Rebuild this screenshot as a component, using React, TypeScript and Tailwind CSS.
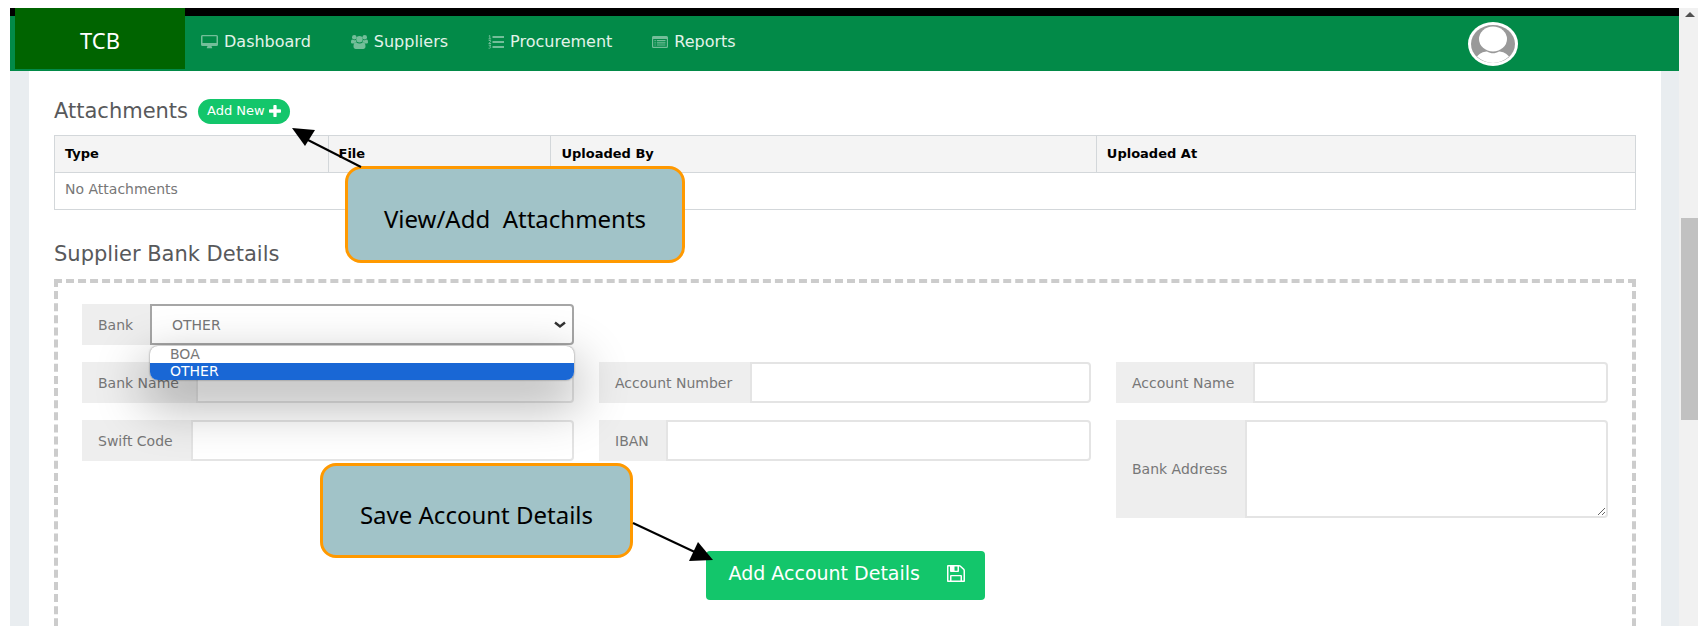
import { ReactNode, useState } from 'react'
import clsx from 'clsx'

const DesktopIcon = () => (
  <svg viewBox="0 0 17 14" className="h-[14px] w-[17px]" fill="currentColor">
    <path
      fillRule="evenodd"
      d="M1.500 0h14A1.500 1.500 0 0 1 17 1.500v8a1.500 1.500 0 0 1-1.500 1.500H10.500c0 .8.700 1.200.7 1.800v.4H5.800v-.4c0-.6.7-1 .7-1.800h-5A1.500 1.500 0 0 1 0 9.500v-8A1.500 1.500 0 0 1 1.500 0zm0 1.300v6.800h14V1.300z"
    />
  </svg>
)

const UsersIcon = () => (
  <svg viewBox="0 0 17 14" className="h-[14px] w-[17px]" fill="currentColor">
    <circle cx="3.300" cy="2.300" r="2.300" />
    <circle cx="13.700" cy="2.300" r="2.300" />
    <circle cx="8.500" cy="4.200" r="3.200" />
    <path d="M0 7.200c0-1.500.3-2.700 1.300-2.700 1.200.8 2.400.9 3.600.4 0 .9.300 1.700.9 2.400-1.300 0-2.300.5-3 1.300H1.700C.7 8.600 0 8.200 0 7.200zM17 7.200c0-1.500-.3-2.700-1.300-2.700-1.200.8-2.400.9-3.600.4 0 .9-.3 1.700-.9 2.400 1.300 0 2.300.5 3 1.300h1.100c1 0 1.700-.4 1.700-1.400z" />
    <path d="M2.500 11.600c0-2.200.6-4.300 2.500-4.300 2.100 1.600 4.900 1.600 7 0 1.900 0 2.500 2.100 2.500 4.300 0 1.500-1 2.400-2.300 2.400H4.800c-1.300 0-2.300-.9-2.300-2.400z" />
  </svg>
)

const ListIcon = () => (
  <svg viewBox="0 0 16 14" className="h-[14px] w-[16px]" fill="currentColor">
    <path d="M4.500 1H16v2H4.500zM4.500 6H16v2H4.500zM4.500 11H16v2H4.500z" />
    <path
      d="M.8 1l1-.5v3.300M.5 3.900h2.600M.7 5.500h1.900v1L.8 8.500h2.300M.7 10.200h2.100l-1 1.200c1.600.3 1 2.100-1.200 1.800"
      fill="none"
      stroke="currentColor"
    />
  </svg>
)

const ReportIcon = () => (
  <svg viewBox="0 0 16 12" className="h-[12px] w-[16px]" fill="currentColor">
    <path
      fillRule="evenodd"
      d="M1.500 0h13A1.500 1.500 0 0 1 16 1.500v9a1.500 1.500 0 0 1-1.500 1.500h-13A1.500 1.500 0 0 1 0 10.500v-9A1.500 1.500 0 0 1 1.500 0zM1.200 3v7.700h13.600V3z"
    />
    <path d="M2.500 4h1.200v1.200H2.500zM4.800 4h8.700v1.200H4.800zM2.500 6.200h1.200v1.200H2.500zM4.800 6.200h8.700v1.200H4.800zM2.500 8.400h1.200v1.200H2.500zM4.800 8.400h8.700v1.200H4.800z" />
  </svg>
)

const PlusIcon = () => (
  <svg viewBox="192 128 1408 1408" className="h-3 w-3" fill="currentColor">
    <path d="M1600 736v192q0 40-28 68t-68 28h-416v416q0 40-28 68t-68 28h-192q-40 0-68-28t-28-68v-416h-416q-40 0-68-28t-28-68v-192q0-40 28-68t68-28h416v-416q0-40 28-68t68-28h192q40 0 68 28t28 68v416h416q40 0 68 28t28 68z" />
  </svg>
)

const SaveIcon = () => (
  <svg viewBox="128 128 1536 1536" className="h-[17px] w-[18px]" preserveAspectRatio="none" fill="currentColor">
    <path d="M512 1536h768v-384h-768v384zm896 0h128v-896q0-14-10-38.500t-20-34.500l-281-281q-10-10-34-20t-39-10v416q0 40-28 68t-68 28h-576q-40 0-68-28t-28-68v-416h-128v1280h128v-416q0-40 28-68t68-28h832q40 0 68 28t28 68v416zm-384-928v-320q0-13-9.500-22.500t-22.500-9.500h-192q-13 0-22.500 9.500t-9.500 22.500v320q0 13 9.500 22.500t22.500 9.500h192q13 0 22.500-9.500t9.500-22.500zm640 32v928q0 40-28 68t-68 28h-1344q-40 0-68-28t-28-68v-1344q0-40 28-68t68-28h928q40 0 88 20t76 48l280 280q28 28 48 76t20 88z" />
  </svg>
)

type NavItem = { label: string; icon: ReactNode }

const navItems: NavItem[] = [
  { label: 'Dashboard', icon: <DesktopIcon /> },
  { label: 'Suppliers', icon: <UsersIcon /> },
  { label: 'Procurement', icon: <ListIcon /> },
  { label: 'Reports', icon: <ReportIcon /> },
]

const Navbar = () => (
  <header className="flex h-[63px] shrink-0 border-t-8 border-black bg-[#028a48]">
    <a
      href="#home"
      className="-mt-2 ml-[5px] flex h-[61px] w-[170px] shrink-0 items-center justify-center bg-[#006400] pt-1 font-['Noto_Sans',sans-serif] text-[22px] text-white"
    >
      TCB
    </a>
    <nav className="ml-4 flex flex-1 items-center gap-10 pb-1">
      {navItems.map((item) => (
        <a
          key={item.label}
          href={`#${item.label.toLowerCase()}`}
          className="flex items-center gap-[6px] text-base text-[#e3f3ea]"
        >
          <span className="opacity-50">{item.icon}</span>
          {item.label}
        </a>
      ))}
    </nav>
    <button type="button" aria-label="Account" className="mr-[161px]">
      <svg viewBox="0 0 50 44" className="h-[44px] w-[50px]">
        <ellipse cx="25" cy="22" rx="25" ry="22" fill="#fff" />
        <ellipse cx="25" cy="22" rx="22" ry="19" fill="#999" />
        <path d="M9 34.500c4-4.500 8-5 10-5 4 2.400 8 2.400 12 0 2 0 6 .5 10 5-9 8.500-23 8.500-32 0z" fill="#fff" />
        <ellipse cx="25" cy="17" rx="14" ry="12.500" fill="#fff" />
      </svg>
    </button>
  </header>
)

const ScrollTrack = () => (
  <div className="flex w-[19px] shrink-0 flex-col items-center bg-[#f1f1f1] pl-[2px]">
    <svg viewBox="0 0 10 5" className="mt-1 h-[5px] w-[10px] shrink-0" fill="#505050">
      <path d="M5 0l5 5H0z" />
    </svg>
    <div className="mt-[201px] h-[202px] w-full shrink-0 bg-[#c1c1c1]" />
  </div>
)

type CalloutProps = { children: ReactNode; className: string }

const Callout = ({ children, className }: CalloutProps) => (
  <div
    className={clsx(
      "absolute flex items-center justify-center whitespace-pre rounded-2xl border-[3px] border-[#ff9900] bg-[#a1c3c8] pt-2 font-['Noto_Sans',sans-serif] text-2xl text-black",
      className,
    )}
  >
    {children}
  </div>
)

type FieldProps = {
  id: string
  label: string
  labelWidth: string
  className?: string
  children: ReactNode
}

const Field = ({ id, label, labelWidth, className, children }: FieldProps) => (
  <div className={clsx('flex', className)}>
    <label
      htmlFor={id}
      className={clsx('flex shrink-0 items-center whitespace-nowrap bg-[#eee] pl-4', labelWidth)}
    >
      {label}
    </label>
    {children}
  </div>
)

const controlClass = 'w-full min-w-0 flex-1 rounded-r border-2 border-[#e4e4e4] bg-white px-5 outline-none'

const Attachments = () => (
  <section className="relative">
    <div className="flex items-center gap-[10px]">
      <h2 className="text-[21px] leading-7 text-[#58595b]">Attachments</h2>
      <button
        type="button"
        className="flex h-[25px] items-center gap-1 rounded-full bg-[#13c66b] px-[9px] text-[13px] text-white"
      >
        Add New
        <PlusIcon />
      </button>
    </div>
    <table className="mt-[10px] w-full table-fixed border-collapse border border-[#d3d7da] text-left">
      <thead className="bg-[#f4f4f4] text-[13px] text-black">
        <tr className="h-[37px]">
          <th className="w-[17.3%] border border-[#d3d7da] px-[10px]">Type</th>
          <th className="w-[14.1%] border border-[#d3d7da] px-[10px]">File</th>
          <th className="w-[34.5%] border border-[#d3d7da] px-[10px]">Uploaded By</th>
          <th className="border border-[#d3d7da] px-[10px]">Uploaded At</th>
        </tr>
      </thead>
      <tbody>
        <tr className="h-[37px]">
          <td colSpan={4} className="px-[10px] pb-1">
            No Attachments
          </td>
        </tr>
      </tbody>
    </table>

    <Callout className="left-[291px] top-[69px] h-[97px] w-[340px]">View/Add  Attachments</Callout>
    <svg viewBox="0 0 72 42" className="absolute left-[237px] top-[30px] h-[42px] w-[72px]">
      <path d="M15 12L70 40" stroke="#000" strokeWidth="2" />
      <path d="M1 1l23 2-10 16z" />
    </svg>
  </section>
)

const banks = ['BOA', 'OTHER']

const BankDetails = () => {
  const [bank, setBank] = useState('OTHER')

  return (
    <section className="relative mt-[30px]">
      <h2 className="text-[21px] leading-7 text-[#58595b]">Supplier Bank Details</h2>
      <form className="mt-[11px] h-[420px] border-4 border-dashed border-[#ccc] px-6 pt-[21px]">
        <div className="grid grid-cols-3 gap-x-[25px] gap-y-[17px]">
          <Field id="bank" label="Bank" labelWidth="w-[68px]" className="relative z-10 h-[41px]">
            <div className="relative flex min-w-0 flex-1">
              <select
                id="bank"
                value={bank}
                onChange={(e) => setBank(e.target.value)}
                className="w-full appearance-none rounded-r border-2 border-[#a6a6a6] bg-white px-5 outline-none"
              >
                {banks.map((name) => (
                  <option key={name}>{name}</option>
                ))}
              </select>
              <svg
                viewBox="0 0 12 8"
                className="pointer-events-none absolute right-2 top-[17px] h-[8px] w-[12px]"
                fill="none"
                stroke="#333"
                strokeWidth="2.4"
              >
                <path d="M1 1.500l5 4 5-4" />
              </svg>
              <ul className="absolute inset-x-0 top-[42px] overflow-hidden rounded-lg bg-white shadow-[0_20px_50px_6px_rgba(0,0,0,0.3),0_0_2px_rgba(0,0,0,0.5)]">
                {banks.map((name) => (
                  <li
                    key={name}
                    onClick={() => setBank(name)}
                    className={clsx(
                      'h-[17px] px-5 leading-4',
                      name === bank && 'bg-[#1967d5] text-white',
                    )}
                  >
                    {name}
                  </li>
                ))}
              </ul>
            </div>
          </Field>

          <Field id="bank-name" label="Bank Name" labelWidth="w-[114px]" className="col-start-1 h-[41px]">
            <input id="bank-name" className={controlClass} />
          </Field>
          <Field id="account-number" label="Account Number" labelWidth="w-[151px]" className="h-[41px]">
            <input id="account-number" className={controlClass} />
          </Field>
          <Field id="account-name" label="Account Name" labelWidth="w-[137px]" className="h-[41px]">
            <input id="account-name" className={controlClass} />
          </Field>

          <Field id="swift-code" label="Swift Code" labelWidth="w-[109px]" className="h-[41px]">
            <input id="swift-code" className={controlClass} />
          </Field>
          <Field id="iban" label="IBAN" labelWidth="w-[67px]" className="h-[41px]">
            <input id="iban" className={controlClass} />
          </Field>
          <Field id="bank-address" label="Bank Address" labelWidth="w-[129px]" className="h-[98px]">
            <textarea id="bank-address" className={controlClass} />
          </Field>
        </div>

        <button
          type="button"
          className="mx-auto mt-[33px] flex h-[49px] w-[279px] items-center justify-between rounded-sm bg-[#13c66b] pb-1 pl-[23px] pr-5 text-[19px] text-white"
        >
          Add Account Details
          <SaveIcon />
        </button>
      </form>

      <Callout className="left-[266px] top-[223px] z-20 h-[95px] w-[313px]">Save Account Details</Callout>
      <svg viewBox="0 0 82 42" className="absolute left-[578px] top-[281px] z-20 h-[42px] w-[82px]">
        <path d="M1 2l66 31" stroke="#000" strokeWidth="2" />
        <path d="M81 39L66 21l-9 19z" />
      </svg>
    </section>
  )
}

const App = () => {
  return (
    <div className="flex h-screen overflow-hidden bg-white pb-3 pl-[10px] pt-2 font-['DejaVu_Sans',sans-serif] text-sm text-[#777]">
      <div className="flex min-w-0 flex-1 flex-col">
        <Navbar />
        <main className="min-h-0 flex-1 overflow-hidden bg-[#e9edf0] pl-[19px] pr-[18px]">
          <div className="bg-white px-[25px] pt-[26px]">
            <Attachments />
            <BankDetails />
          </div>
        </main>
      </div>
      <ScrollTrack />
    </div>
  )
}

export default App
